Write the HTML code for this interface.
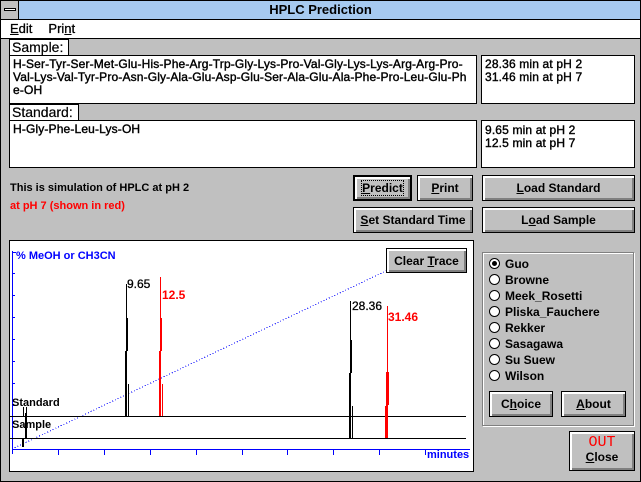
<!DOCTYPE html>
<html><head><style>
*{margin:0;padding:0;box-sizing:border-box}
body{width:641px;height:482px;background:#c0c0c0;font-family:"Liberation Sans",sans-serif;font-size:12px;font-weight:bold;position:relative;overflow:hidden}
.a{position:absolute}
.w{background:#fff;border:1px solid #000}
.btn{position:absolute;background:#c0c0c0;border:1px solid #000;box-shadow:inset 1px 1px 0 #fff,inset 2px 2px 0 #fff,inset -1px -1px 0 #808080,inset -2px -2px 0 #808080;text-align:center;font-size:12px}
u{text-decoration:underline}
.t{font-size:12px;line-height:13px;padding:2px 3px;font-weight:normal;-webkit-text-stroke:0.4px #000;letter-spacing:0.15px}
.rad{position:absolute;left:489px;font-size:12px}
.rad i{display:inline-block;width:11px;height:11px;border-radius:50%;background:#fff;border:1px solid #000;vertical-align:-1px;margin-right:5px;position:relative}
</style></head><body>
<div class="a" style="left:0;top:0;width:641px;height:482px;border:1px solid #000"></div>
<div class="a" style="left:0;top:0;width:641px;height:20px;background:#a6caf0;border:1px solid #000;text-align:center;font-size:13px;line-height:18px">HPLC Prediction</div>
<div class="a" style="left:1px;top:1px;width:18px;height:18px;background:#c0c0c0;border-right:1px solid #000"><div class="a" style="left:3px;top:7px;width:12px;height:3px;background:#fff;border:1px solid #000"></div></div>
<div class="a" style="left:1px;top:20px;width:639px;height:19px;background:#fff;border-bottom:1px solid #000;font-size:13px;line-height:18px;font-weight:normal;-webkit-text-stroke:0.3px #000"><span style="margin-left:9px"><u>E</u>dit</span><span style="margin-left:16px">Pri<u>n</u>t</span></div>

<div class="a w" style="left:9px;top:39px;width:60px;height:17px;font-size:14px;line-height:15px;padding-left:2px;font-weight:normal;-webkit-text-stroke:0.2px #000">Sample:</div>
<div class="a w t" style="left:9px;top:55px;width:468px;height:49px">H-Ser-Tyr-Ser-Met-Glu-His-Phe-Arg-Trp-Gly-Lys-Pro-Val-Gly-Lys-Lys-Arg-Arg-Pro-<br>Val-Lys-Val-Tyr-Pro-Asn-Gly-Ala-Glu-Asp-Glu-Ser-Ala-Glu-Ala-Phe-Pro-Leu-Glu-Ph<br>e-OH</div>
<div class="a w t" style="left:481px;top:55px;width:154px;height:49px">28.36 min at pH 2<br>31.46 min at pH 7</div>
<div class="a w" style="left:9px;top:104px;width:70px;height:17px;font-size:14px;line-height:15px;padding-left:2px;font-weight:normal;-webkit-text-stroke:0.2px #000">Standard:</div>
<div class="a w t" style="left:9px;top:120px;width:468px;height:48px">H-Gly-Phe-Leu-Lys-OH</div>
<div class="a w t" style="left:481px;top:120px;width:154px;height:48px;padding-top:3px">9.65 min at pH 2<br>12.5 min at pH 7</div>

<div class="a" style="left:10px;top:182px;font-size:11px">This is simulation of HPLC at pH 2</div>
<div class="a" style="left:10px;top:200px;font-size:11px;color:#f00">at pH 7 (shown in red)</div>

<div class="btn" style="left:353px;top:175px;width:59px;height:26px;border-width:2px;line-height:22px"><span style="outline:1px dotted #000"><u>P</u>redict</span></div>
<div class="btn" style="left:417px;top:175px;width:56px;height:26px;line-height:24px"><u>P</u>rint</div>
<div class="btn" style="left:482px;top:175px;width:153px;height:26px;line-height:24px"><u>L</u>oad Standard</div>
<div class="btn" style="left:353px;top:207px;width:120px;height:26px;line-height:24px"><u>S</u>et Standard Time</div>
<div class="btn" style="left:482px;top:207px;width:153px;height:26px;line-height:24px">L<u>o</u>ad Sample</div>

<div class="a w" style="left:9px;top:240px;width:465px;height:232px"></div>
<svg class="a" style="left:0;top:0" width="641" height="482">
<g stroke="#00f" stroke-width="1" shape-rendering="crispEdges">
<line x1="12.5" y1="251" x2="12.5" y2="454"/>
<line x1="12" y1="449.5" x2="470" y2="449.5"/>
<path d="M58.5 450v5M104.5 450v5M150.5 450v5M196.5 450v5M242.5 450v5M287.5 450v5M333.5 450v5M379.5 450v5M425.5 450v5M12 252.5h4M12 273.5h3M12 295.5h3M12 317.5h3M12 339.5h3M12 361.5h3M12 383.5h3M12 405.5h3"/>
<line x1="12" y1="449" x2="386" y2="271" stroke-dasharray="1 2"/>
</g>
<g stroke="#000" shape-rendering="crispEdges" fill="none">
<line x1="9" y1="416.5" x2="466" y2="416.5"/>
<line x1="9" y1="438.5" x2="466" y2="438.5"/>
<path d="M23.5 416v-9M26.5 416v-9M22.5 438v9M23.5 438v9M25.5 438v-25M26.5 438v-25"/>
<path d="M125.5 416v-65M126.5 416v-132M127.5 351v-33M128.5 416v-32"/>
<path d="M349.5 438v-65M350.5 438v-137M351.5 373v-33M352.5 438v-32"/>
</g>
<g stroke="#f00" shape-rendering="crispEdges" fill="none">
<path d="M159.5 416v-65M160.5 416v-139M161.5 351v-33M162.5 416v-32"/>
<path d="M385.5 438v-32M386.5 438v-66M387.5 438v-132M388.5 405v-33"/>
</g>
</svg>
<div class="a" style="left:16px;top:250px;color:#00f;font-size:11px">% MeOH or CH3CN</div>
<div class="a" style="left:427px;top:449px;color:#00f;font-size:11px">minutes</div>
<div class="a" style="left:127px;top:277px;font-size:12px;font-weight:normal;-webkit-text-stroke:0.3px #000">9.65</div>
<div class="a" style="left:162px;top:288px;font-size:12px;color:#f00">12.5</div>
<div class="a" style="left:352px;top:299px;font-size:12px;font-weight:normal;-webkit-text-stroke:0.3px #000">28.36</div>
<div class="a" style="left:388px;top:310px;font-size:12px;color:#f00">31.46</div>
<div class="a" style="left:12px;top:397px;font-size:11px">Standard</div>
<div class="a" style="left:12px;top:419px;font-size:11px">Sample</div>
<div class="btn" style="left:386px;top:248px;width:81px;height:25px;line-height:24px">Clear <u>T</u>race</div>

<div class="a" style="left:482px;top:252px;width:152px;height:174px;border:1px solid #808080;box-shadow:1px 1px 0 #fff,inset 1px 1px 0 #fff"></div>
<div class="rad" style="top:257px"><i><b class="a" style="left:2px;top:2px;width:5px;height:5px;border-radius:50%;background:#000"></b></i>Guo</div>
<div class="rad" style="top:273px"><i></i>Browne</div>
<div class="rad" style="top:289px"><i></i>Meek_Rosetti</div>
<div class="rad" style="top:305px"><i></i>Pliska_Fauchere</div>
<div class="rad" style="top:321px"><i></i>Rekker</div>
<div class="rad" style="top:337px"><i></i>Sasagawa</div>
<div class="rad" style="top:353px"><i></i>Su Suew</div>
<div class="rad" style="top:369px"><i></i>Wilson</div>
<div class="btn" style="left:489px;top:391px;width:64px;height:26px;line-height:24px">C<u>h</u>oice</div>
<div class="btn" style="left:561px;top:391px;width:65px;height:26px;line-height:24px"><u>A</u>bout</div>
<div class="btn" style="left:569px;top:431px;width:66px;height:40px;line-height:14px;padding-top:3px"><span style="color:#f00;font-weight:normal;font-size:15px;font-family:'Liberation Mono',monospace">OUT</span><br><u>C</u>lose</div>
</body></html>
